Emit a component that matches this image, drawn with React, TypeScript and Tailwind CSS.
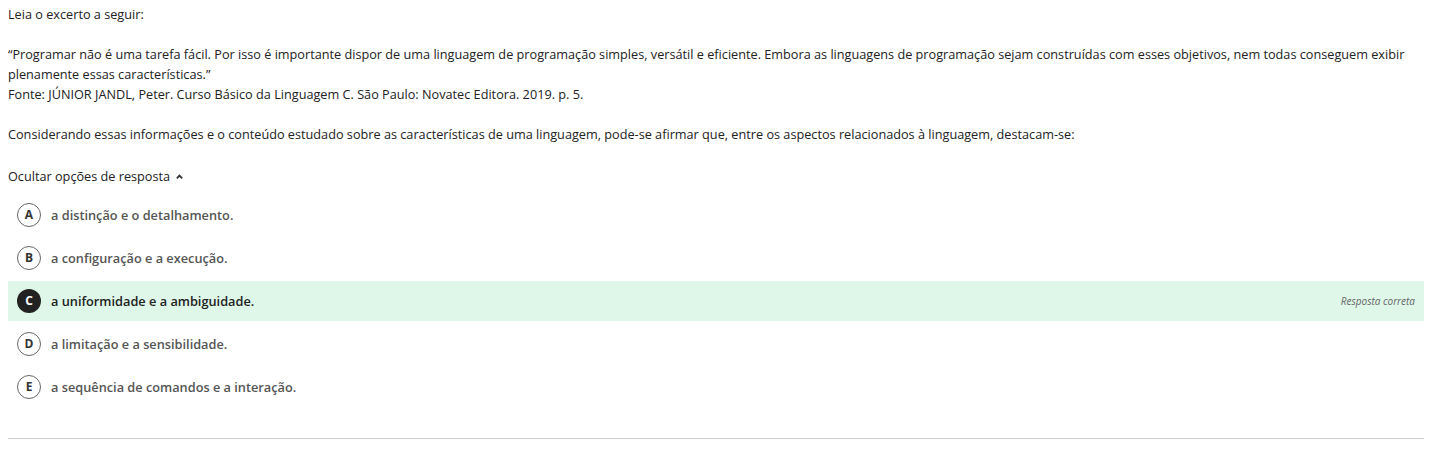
import React from "react";

const options = [
  { l: "A", t: "a distinção e o detalhamento." },
  { l: "B", t: "a configuração e a execução." },
  { l: "C", t: "a uniformidade e a ambiguidade.", correct: true },
  { l: "D", t: "a limitação e a sensibilidade." },
  { l: "E", t: "a sequência de comandos e a interação." },
];

export default function App() {
  return (
    <div
      className="bg-white w-[1436px] h-[449px] pl-2 pr-3 text-[#222] text-[12.7px] leading-[20px]"
      style={{ fontFamily: '"Open Sans", sans-serif' }}
    >
      <div className="pt-[4px]">
        <p>Leia o excerto a seguir:</p>
        <p className="mt-[20px]">
          “Programar não é uma tarefa fácil. Por isso é importante dispor de uma linguagem de programação simples, versátil e eficiente. Embora as linguagens de programação sejam construídas com esses objetivos, nem todas conseguem exibir plenamente essas características.”
          <br />
          Fonte: JÚNIOR JANDL, Peter. Curso Básico da Linguagem C. São Paulo: Novatec Editora. 2019. p. 5.
        </p>
        <p className="mt-[20px]">
          Considerando essas informações e o conteúdo estudado sobre as características de uma linguagem, pode-se afirmar que, entre os aspectos relacionados à linguagem, destacam-se:
        </p>
        <div className="mt-[22px] flex items-center gap-[5px]">
          <span>Ocultar opções de resposta</span>
          <svg width="9" height="9" viewBox="0 0 10 10">
            <path d="M2 7 L5 4 L8 7" stroke="#333" strokeWidth="2" fill="none" />
          </svg>
        </div>
      </div>
      <div className="mt-[9px] flex flex-col gap-[3px]">
        {options.map((o) => (
          <div
            key={o.l}
            className={`h-[40px] flex items-center pl-[9px] pr-[9px] ${o.correct ? "bg-[#dff7e9]" : ""}`}
          >
            <span
              className={`w-[24px] h-[24px] rounded-full flex items-center justify-center text-[12px] font-bold ${
                o.correct ? "bg-[#222] text-white" : "border border-[#666] text-[#333]"
              }`}
            >
              {o.l}
            </span>
            <span
              className={`ml-[10px] text-[12.75px] font-semibold ${o.correct ? "text-[#222]" : "text-[#555]"}`}
            >
              {o.t}
            </span>
            {o.correct && (
              <span className="ml-auto text-[10px] italic text-[#666]">Resposta correta</span>
            )}
          </div>
        ))}
      </div>
      <div className="mt-[31px] border-t border-[#ccc]" />
    </div>
  );
}
